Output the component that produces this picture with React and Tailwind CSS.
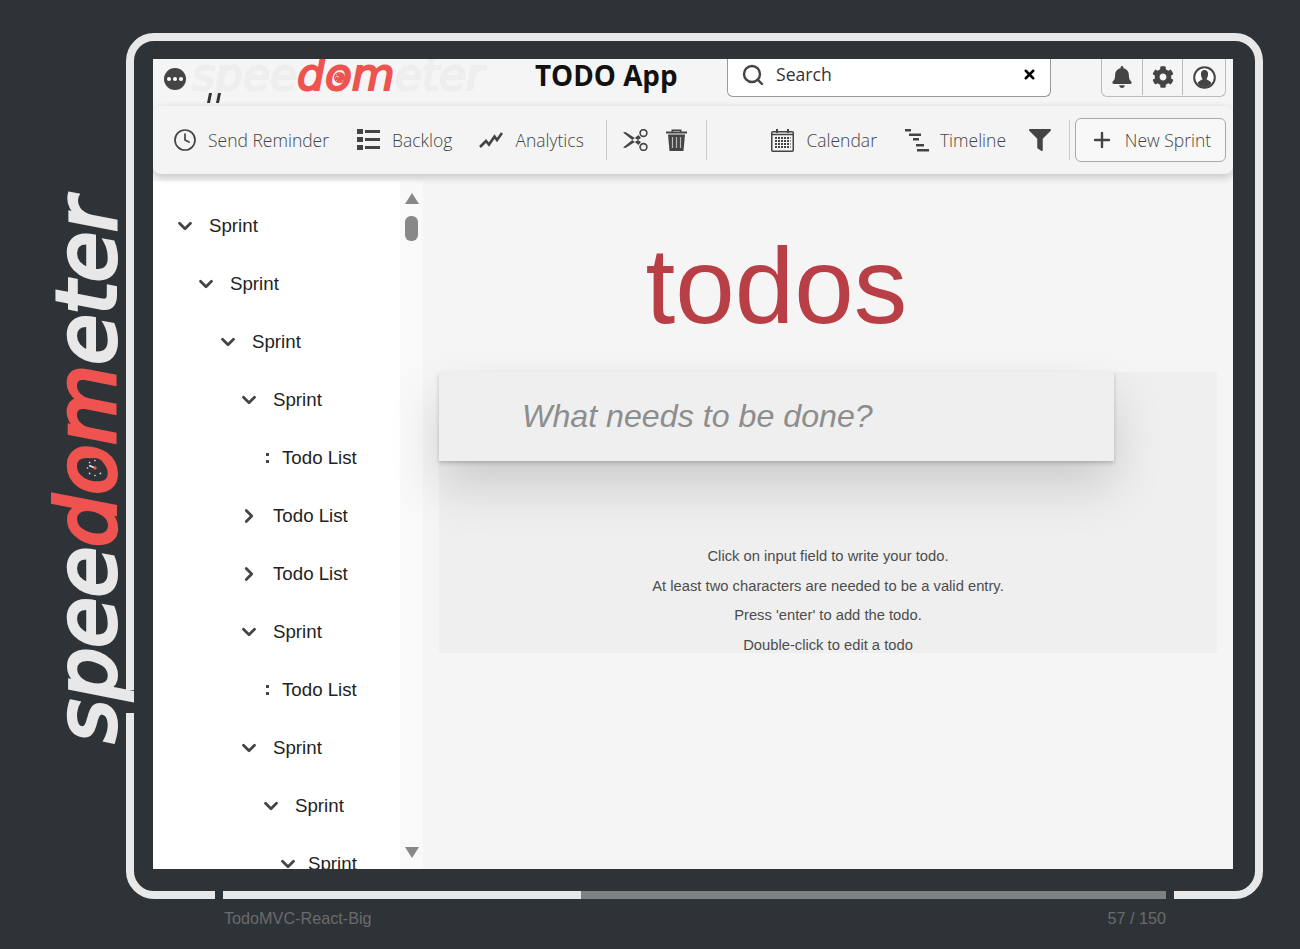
import React from 'react';
import { Clock, Plus, Search, X, ChevronDown, ChevronRight } from 'lucide-react';
import { FaBell, FaCog, FaFilter } from 'react-icons/fa';

const treeRows = [
  { id: 1, label: 'Sprint', pad: 'pl-[21px]', gap: 'ml-[13px]', open: true },
  { id: 2, label: 'Sprint', pad: 'pl-[42px]', gap: 'ml-[13px]', open: true },
  { id: 3, label: 'Sprint', pad: 'pl-[64px]', gap: 'ml-[13px]', open: true },
  { id: 4, label: 'Sprint', pad: 'pl-[85px]', gap: 'ml-[13px]', open: true },
  { id: 5, label: 'Todo List', pad: 'pl-[113px]', gap: 'ml-[12px]', leaf: true },
  { id: 6, label: 'Todo List', pad: 'pl-[85px]', gap: 'ml-[13px]' },
  { id: 7, label: 'Todo List', pad: 'pl-[85px]', gap: 'ml-[13px]' },
  { id: 8, label: 'Sprint', pad: 'pl-[85px]', gap: 'ml-[13px]', open: true },
  { id: 9, label: 'Todo List', pad: 'pl-[113px]', gap: 'ml-[12px]', leaf: true },
  { id: 10, label: 'Sprint', pad: 'pl-[85px]', gap: 'ml-[13px]', open: true },
  { id: 11, label: 'Sprint', pad: 'pl-[107px]', gap: 'ml-[13px]', open: true },
  { id: 12, label: 'Sprint', pad: 'pl-[124px]', gap: 'ml-[9px]', open: true },
];

const ListIcon = () => (
  <svg width="23" height="22" viewBox="0 0 23 22" fill="#444">
    <rect x="0" y="0" width="6" height="5" />
    <rect x="0" y="8" width="6" height="5" />
    <rect x="0" y="16" width="6" height="5" />
    <rect x="8" y="1" width="15" height="3" />
    <rect x="8" y="9" width="15" height="3" />
    <rect x="8" y="17" width="15" height="3" />
  </svg>
);

const AnalyticsIcon = () => (
  <svg width="24" height="18" viewBox="0 0 24 18" fill="none" stroke="#444" strokeWidth="2.6">
    <path d="M1 16 L7 10 L10 13.5 L15.5 5.5 L18 9 L23 2" />
  </svg>
);

const ScissorsIcon = () => (
  <svg width="25" height="22" viewBox="0 0 25 22">
    <path d="M0 3.5 L2.5 3 L18 13 L15.5 16 Z M0 18.5 L2.5 19 L18 9 L15.5 6 Z" fill="#444" />
    <circle cx="20.5" cy="4" r="3.4" fill="none" stroke="#444" strokeWidth="1.6" />
    <circle cx="20.5" cy="18" r="3.4" fill="none" stroke="#444" strokeWidth="1.6" />
  </svg>
);

const TrashIcon = () => (
  <svg width="21" height="22" viewBox="0 0 21 22" fill="#444">
    <path d="M5.5 3 V0.5 H15.5 V3 H14 V2 H7 V3 Z" />
    <rect x="0" y="2.5" width="21" height="2" />
    <path d="M2 5.5 H19 L17.5 22 H3.5 Z" />
    <path d="M6.5 8 V19 M10.5 8 V19 M14.5 8 V19" stroke="#bbb" strokeWidth="1.2" />
  </svg>
);

const CalendarIcon = () => (
  <svg width="23" height="23" viewBox="0 0 23 23" fill="none" stroke="#444">
    <rect x="0.75" y="2.75" width="21.5" height="19.5" rx="1" strokeWidth="1.5" />
    <path d="M1 5.5 H22" strokeWidth="1.5" />
    <path d="M6 0 V4 M17 0 V4" strokeWidth="2" />
    <path d="M4 9 H19.5 M4 12 H19.5 M4 15 H19.5 M4 18 H19.5" strokeWidth="2" strokeDasharray="2 1" />
  </svg>
);

const TimelineIcon = () => (
  <svg width="24" height="23" viewBox="0 0 24 23" fill="#444">
    <rect x="0" y="0" width="6" height="2.5" />
    <rect x="4" y="4.5" width="12" height="2.5" />
    <rect x="8" y="9" width="6" height="2.5" />
    <rect x="11" y="15" width="8" height="2.5" />
    <rect x="12" y="20" width="12" height="2.5" />
  </svg>
);

const UserCircle = () => (
  <svg width="23" height="23" viewBox="0 0 23 23">
    <circle cx="11.5" cy="11.5" r="10.3" fill="#fff" stroke="#444" strokeWidth="2" />
    <path d="M11.5 4 C8.5 4 7.6 6.5 8 9 C8.3 11 9 12.5 9.6 13.2 C7.5 14.5 5.5 15 4.6 17 C6 19.5 8.6 21 11.5 21 C14.4 21 17 19.5 18.4 17 C17.5 15 15.5 14.5 13.4 13.2 C14 12.5 14.7 11 15 9 C15.4 6.5 14.5 4 11.5 4 Z" fill="#444" />
  </svg>
);

const Gauge = ({ size, face, mark }) => (
  <svg width={size} height={size} viewBox="0 0 24 24">
    <circle cx="12" cy="12" r="12" fill={face} />
    <g fill={mark}>
      <circle cx="12" cy="3" r="1" />
      <circle cx="5.5" cy="5.5" r="1" />
      <circle cx="3" cy="12" r="1" />
      <circle cx="5.5" cy="18.5" r="1" />
      <circle cx="12" cy="21" r="1" />
      <circle cx="18.5" cy="18.5" r="1" />
    </g>
    <path d="M12 12 L5 9" stroke={mark} strokeWidth="2" />
    <circle cx="12" cy="12" r="2" fill="#ef5350" />
  </svg>
);

const ToolItem = ({ icon, label, className }) => (
  <div className={`flex items-center ${className}`}>
    {icon}
    <span>{label}</span>
  </div>
);

const Header = () => (
  <div className="flex h-[47px] items-start overflow-hidden bg-[#f5f5f5]">
    <div className="ml-[11px] mt-[9px] flex h-[22px] w-[22px] items-center justify-center gap-[2px] rounded-full bg-[#444]">
      <span className="h-[4px] w-[4px] rounded-full bg-white" />
      <span className="h-[4px] w-[4px] rounded-full bg-white" />
      <span className="h-[4px] w-[4px] rounded-full bg-white" />
    </div>
    <div className="relative ml-[6px] mt-[-15px] w-[320px] whitespace-nowrap font-['DejaVu_Sans'] text-[44px] leading-[62px] text-[#eeeeee] italic [-webkit-text-stroke-width:2px]">
      spee<span className="text-[#ef5350]">dom</span>eter
      <svg className="absolute left-[15px] top-[48px]" width="16" height="12" viewBox="0 0 16 12" fill="#333">
        <path d="M2 1 H5 L3 11 H0 Z M11 1 H14 L12 11 H9 Z" />
      </svg>
      <span className="absolute left-[142px] top-[28px]">
        <Gauge size={11} face="#ef5350" mark="#ffffff" />
      </span>
    </div>
    <h1 className="ml-[23px] mt-[-2px] w-[142px] font-['Open_Sans'] text-[27.8px] leading-[36px] font-bold whitespace-nowrap text-[#111]">TODO App</h1>
    <div className="ml-[50px] flex h-[38px] w-[324px] items-center rounded-b-md border border-t-0 border-[#999] bg-white pb-[6px] pl-[13px] pr-[13px] font-['Open_Sans'] text-[17.6px] text-[#333]">
      <Search size={24} strokeWidth={2.4} className="text-[#444]" />
      <span className="ml-[11px] flex-1">Search</span>
      <X size={15} strokeWidth={4} className="text-black" />
    </div>
    <div className="ml-[50px] flex h-[38px] w-[125px] rounded-b-md border border-t-0 border-[#bbb] pb-[1px] text-[#444]">
      <div className="flex w-[41px] items-center justify-center border-r border-[#bbb]"><FaBell size={22} /></div>
      <div className="flex w-[40px] items-center justify-center border-r border-[#bbb]"><FaCog size={22} /></div>
      <div className="flex flex-1 items-center justify-center"><UserCircle /></div>
    </div>
  </div>
);

const Toolbar = () => (
  <div className="relative z-10 flex h-[68px] items-center rounded-lg bg-[#f4f4f4] pl-[20px] pr-[7px] font-['Open_Sans'] text-[17.5px] font-light text-[#444] shadow-[0_3px_8px_rgba(0,0,0,0.2)]">
    <ToolItem icon={<Clock size={24} strokeWidth={1.7} />} label="Send Reminder" className="gap-[11px]" />
    <ToolItem icon={<ListIcon />} label="Backlog" className="ml-[28px] gap-3" />
    <ToolItem icon={<AnalyticsIcon />} label="Analytics" className="ml-[27px] gap-3" />
    <div className="ml-[22px] h-[40px] w-px bg-[#ccc]" />
    <div className="ml-[16px]"><ScissorsIcon /></div>
    <div className="ml-[18px]"><TrashIcon /></div>
    <div className="ml-[19px] h-[40px] w-px bg-[#ccc]" />
    <ToolItem icon={<CalendarIcon />} label="Calendar" className="ml-auto gap-3" />
    <ToolItem icon={<TimelineIcon />} label="Timeline" className="ml-[28px] gap-[11px]" />
    <FaFilter size={22} className="ml-[23px]" />
    <div className="ml-[18px] h-[40px] w-px bg-[#ccc]" />
    <div className="ml-[5px] flex h-[44px] w-[151px] items-center justify-center gap-[11px] rounded-md border border-[#aaa] bg-[#f8f8f8]">
      <Plus size={24} strokeWidth={2.4} />
      <span>New Sprint</span>
    </div>
  </div>
);

const TreeRow = ({ row }) => (
  <div className={`flex h-[58px] shrink-0 items-center ${row.pad}`}>
    {row.leaf ? (
      <span className="flex h-[14px] w-[4px] flex-col justify-center gap-[4px]">
        <span className="h-[3px] w-[3px] bg-[#444]" />
        <span className="h-[3px] w-[3px] bg-[#444]" />
      </span>
    ) : row.open ? (
      <ChevronDown size={22} strokeWidth={3} className="text-[#444]" />
    ) : (
      <ChevronRight size={22} strokeWidth={3} className="text-[#444]" />
    )}
    <span className={`${row.gap} whitespace-nowrap`}>{row.label}</span>
  </div>
);

const Sidebar = () => (
  <div className="flex w-[270px] shrink-0 bg-white font-['Liberation_Sans'] text-[18.7px] text-[#222]">
    <div className="flex flex-1 flex-col overflow-hidden pt-[16px]">
      {treeRows.map((row) => (
        <TreeRow key={row.id} row={row} />
      ))}
    </div>
    <div className="flex w-[23px] flex-col items-center bg-[#f9f9f9] pt-[12px] pb-[11px]">
      <div className="h-0 w-0 border-x-[7px] border-b-[11px] border-x-transparent border-b-[#888]" />
      <div className="mt-[12px] h-[25px] w-[13px] rounded-md bg-[#888]" />
      <div className="mt-auto h-0 w-0 border-x-[7px] border-t-[11px] border-x-transparent border-t-[#888]" />
    </div>
  </div>
);

const Main = () => (
  <div className="relative flex-1 bg-[#f5f5f5] px-4 font-['Liberation_Sans']">
    <h1 className="mt-[42px] h-[149px] w-[675px] text-center text-[107px] leading-[126px] text-[#b83f45]">todos</h1>
    <div className="h-[281px] bg-[#efefef]">
      <div className="flex h-[89px] w-[675px] items-center bg-[#efefef] pb-[1px] pl-[83px] text-[32.2px] text-[#8d8d8d] italic shadow-[0_2px_4px_rgba(0,0,0,0.2),0_25px_50px_rgba(0,0,0,0.15)]">
        What needs to be done?
      </div>
      <div className="h-[192px] overflow-hidden pt-[81px] text-center text-[14.75px] leading-[29.7px] text-[#4d4d4d]">
        <p>Click on input field to write your todo.</p>
        <p>At least two characters are needed to be a valid entry.</p>
        <p>Press 'enter' to add the todo.</p>
        <p>Double-click to edit a todo</p>
      </div>
    </div>
  </div>
);

export default function App() {
  return (
    <div className="relative h-[949px] overflow-hidden bg-[#2e3338] pt-[33px] pl-[126px]">
      {/* frame with the progress bar cut into its bottom edge */}
      <div className="relative h-[866px] w-[1137px] rounded-[28px] border-8 border-[#e8e8e8] pt-[18px] pr-[22px] pb-[22px] pl-[19px]">
        <div className="flex h-full flex-col overflow-hidden bg-[#f5f5f5]">
          <Header />
          <Toolbar />
          <div className="mt-[7px] flex min-h-0 flex-1">
            <Sidebar />
            <Main />
          </div>
        </div>
        <div className="absolute bottom-[-8px] left-[81px] flex h-[8px] w-[959px] bg-[#2e3338] px-[8px]">
          <div className="w-[358px] bg-[#e8e8e8]" />
          <div className="flex-1 bg-[#808080]" />
        </div>
      </div>

      {/* side logo sits over the frame's left edge */}
      <div className="absolute left-[126px] top-[690px] h-[23px] w-[8px] bg-[#2e3338]" />
      <div className="absolute left-[32px] top-[198px] rotate-180 whitespace-nowrap font-['DejaVu_Sans'] text-[82px] leading-[110px] text-[#e8e8e8] italic [-webkit-text-stroke-width:4px] [writing-mode:vertical-rl]">
        spee<span className="text-[#ef5350]">dom</span>eter
      </div>
      <div className="absolute left-[85px] top-[458px]">
        <Gauge size={20} face="#2e3338" mark="#e8e8e8" />
      </div>

      <div className="mt-[9px] ml-[98px] flex w-[942px] justify-between font-['Liberation_Sans'] text-[16.2px] leading-[20px] text-[#6b6b6b]">
        <span>TodoMVC-React-Big</span>
        <span>57 / 150</span>
      </div>
    </div>
  );
}
